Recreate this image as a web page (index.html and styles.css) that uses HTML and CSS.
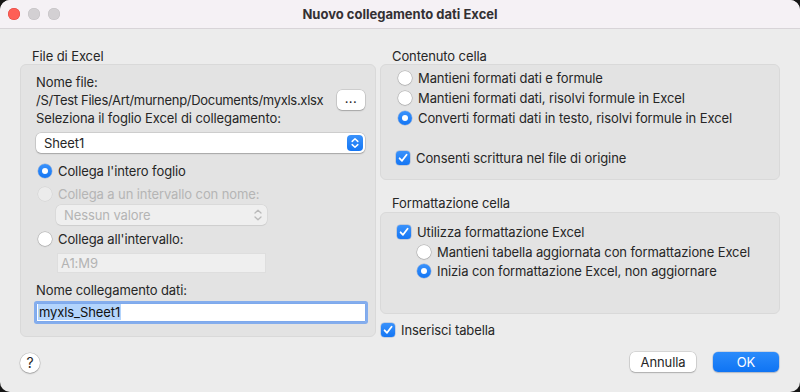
FILE: index.html
```html
<!DOCTYPE html>
<html lang="it">
<head>
<meta charset="utf-8">
<title>Nuovo collegamento dati Excel</title>
<link rel="stylesheet" href="styles.css">
</head>
<body>
<div class="window">
  <header class="titlebar">
    <div class="lights">
      <span class="light red"></span>
      <span class="light gray"></span>
      <span class="light gray"></span>
    </div>
    <div class="title">Nuovo collegamento dati Excel</div>
    <div></div>
  </header>

  <main class="content">
    <div class="columns">
      <section class="col">
        <div class="group-label">File di Excel</div>
        <div class="box box-file">
          <div class="line l-nome">Nome file:</div>
          <div class="path-row">
            <span class="path">/S/Test Files/Art/murnenp/Documents/myxls.xlsx</span>
            <span class="btn btn-dots">...</span>
          </div>
          <div class="line l-sel">Seleziona il foglio Excel di collegamento:</div>
          <div class="popup popup-sheet">
            <span class="popup-text">Sheet1</span>
            <span class="popup-arrows">
              <svg width="16" height="16" viewBox="0 0 16 16"><path d="M5.2 6.4 L8 3.8 L10.8 6.4 M5.2 9.6 L8 12.2 L10.8 9.6" fill="none" stroke="#fff" stroke-width="1.5" stroke-linecap="round" stroke-linejoin="round"/></svg>
            </span>
          </div>
          <label class="opt r-intero"><span class="radio on"></span><span>Collega l'intero foglio</span></label>
          <label class="opt r-nome disabled"><span class="radio dis"></span><span>Collega a un intervallo con nome:</span></label>
          <div class="popup popup-dis">
            <span class="popup-text">Nessun valore</span>
            <svg class="dis-arrows" width="10" height="16" viewBox="0 0 10 16"><path d="M2 6 L5 3.2 L8 6 M2 10 L5 12.8 L8 10" fill="none" stroke="#b9b9b9" stroke-width="1.3" stroke-linecap="round" stroke-linejoin="round"/></svg>
          </div>
          <label class="opt r-interv"><span class="radio"></span><span>Collega all'intervallo:</span></label>
          <div class="field field-dis">A1:M9</div>
          <div class="line l-coll">Nome collegamento dati:</div>
          <div class="field field-focus"><span class="sel">myxls_Sheet1</span></div>
        </div>
      </section>

      <section class="col">
        <div class="group-label">Contenuto cella</div>
        <div class="box box-cont">
          <label class="opt row20"><span class="radio"></span><span>Mantieni formati dati e formule</span></label>
          <label class="opt row20"><span class="radio"></span><span>Mantieni formati dati, risolvi formule in Excel</span></label>
          <label class="opt row20"><span class="radio on"></span><span>Converti formati dati in testo, risolvi formule in Excel</span></label>
          <label class="opt row20 c-consenti"><span class="check"><svg width="14" height="14" viewBox="0 0 14 14"><path d="M3.6 7.3 L6 9.8 L10.6 3.8" fill="none" stroke="#fff" stroke-width="1.8" stroke-linecap="round" stroke-linejoin="round"/></svg></span><span>Consenti scrittura nel file di origine</span></label>
        </div>
        <div class="group-label gl-form">Formattazione cella</div>
        <div class="box box-form">
          <label class="opt row20 c-util"><span class="check"><svg width="14" height="14" viewBox="0 0 14 14"><path d="M3.6 7.3 L6 9.8 L10.6 3.8" fill="none" stroke="#fff" stroke-width="1.8" stroke-linecap="round" stroke-linejoin="round"/></svg></span><span>Utilizza formattazione Excel</span></label>
          <label class="opt row19 sub"><span class="radio"></span><span>Mantieni tabella aggiornata con formattazione Excel</span></label>
          <label class="opt row19 sub"><span class="radio on"></span><span>Inizia con formattazione Excel, non aggiornare</span></label>
        </div>
        <label class="opt row20 c-ins"><span class="check"><svg width="14" height="14" viewBox="0 0 14 14"><path d="M3.6 7.3 L6 9.8 L10.6 3.8" fill="none" stroke="#fff" stroke-width="1.8" stroke-linecap="round" stroke-linejoin="round"/></svg></span><span>Inserisci tabella</span></label>
      </section>
    </div>

    <footer class="footer">
      <span class="help">?</span>
      <div class="actions">
        <span class="btn btn-action">Annulla</span>
        <span class="btn btn-action btn-ok">OK</span>
      </div>
    </footer>
  </main>
</div>
</body>
</html>
```

FILE: styles.css
```css
* { box-sizing: border-box; }

html, body {
  margin: 0;
  padding: 0;
  background: #161616;
}

body {
  font-family: "Inter", "Noto Sans", "Liberation Sans", sans-serif;
  font-size: 13px;
  letter-spacing: -0.1px;
  color: #262626;
}

.window {
  width: 800px;
  height: 392px;
  border-radius: 10px;
  overflow: hidden;
  background: #ececec;
  display: flex;
  flex-direction: column;
}

.titlebar {
  height: 29px;
  flex: none;
  background: #f5f1f5;
  border-bottom: 1px solid #d8d4d8;
  display: grid;
  grid-template-columns: 1fr auto 1fr;
  align-items: center;
}

.lights {
  display: flex;
  gap: 8px;
  padding-left: 8px;
  padding-bottom: 1px;
}

.light {
  width: 12px;
  height: 12px;
  border-radius: 50%;
}

.light.red {
  background: #fe5f57;
  box-shadow: inset 0 0 0 0.5px #e0443e;
}

.light.gray {
  background: #d3d0d3;
  box-shadow: inset 0 0 0 0.5px #c2bfc2;
}

.title {
  font-weight: 700;
  font-size: 13px;
  letter-spacing: 0;
  color: #333033;
  padding-bottom: 1px;
}

.content {
  flex: 1;
  padding: 20px 21px 0 20px;
  display: flex;
  flex-direction: column;
}

.columns {
  display: grid;
  grid-template-columns: 356px 400px;
  column-gap: 4px;
  align-items: start;
}

.col {
  display: flex;
  flex-direction: column;
}

.group-label {
  height: 15px;
  line-height: 15px;
  padding-left: 12px;
}

.gl-form {
  margin-top: 16px;
  height: 16px;
}

.box {
  background: #e3e3e3;
  border: 1px solid #d9d9d9;
  border-radius: 6px;
  display: flex;
  flex-direction: column;
}

/* ---------- left box ---------- */
.box-file {
  padding: 9px 10px 14px 15px;
}

.line {
  height: 16px;
  line-height: 16px;
  white-space: nowrap;
}

.path-row {
  height: 22px;
  margin-top: -1px;
  display: flex;
  align-items: center;
  justify-content: space-between;
}

.path {
  white-space: nowrap;
  letter-spacing: -0.3px;
}

.btn {
  background: #fff;
  border-radius: 5px;
  box-shadow: 0 0 0 0.5px rgba(0,0,0,0.18), 0 1px 1.5px rgba(0,0,0,0.2);
  display: flex;
  align-items: center;
  justify-content: center;
}

.btn-dots {
  width: 28px;
  height: 20px;
  font-size: 13px;
  letter-spacing: 0.5px;
  padding-bottom: 4px;
}

.l-sel { margin-top: -1px; }

.popup {
  height: 20px;
  border-radius: 5px;
  display: flex;
  align-items: center;
  justify-content: space-between;
}

.popup-sheet {
  margin-top: 7px;
  background: #fff;
  box-shadow: 0 0 0 0.5px rgba(0,0,0,0.18), 0 1px 1.5px rgba(0,0,0,0.2);
  padding: 0 2px 0 8px;
}

.popup-arrows {
  width: 16px;
  height: 16px;
  border-radius: 4px;
  background: linear-gradient(#3a92fb, #1476f4);
  display: flex;
}

.opt {
  display: flex;
  align-items: center;
  gap: 6px;
  white-space: nowrap;
}

.radio {
  width: 14px;
  height: 14px;
  border-radius: 50%;
  background: #fff;
  box-shadow: 0 0 0 0.5px rgba(0,0,0,0.22), 0 0.5px 1.5px rgba(0,0,0,0.18);
  flex: none;
  display: flex;
  align-items: center;
  justify-content: center;
}

.radio.on {
  background: linear-gradient(#3a92fb, #1476f4);
  box-shadow: 0 0 0 0.5px rgba(0,60,160,0.3);
}

.radio.on::after {
  content: "";
  width: 6px;
  height: 6px;
  border-radius: 50%;
  background: #fff;
}

.radio.dis {
  background: #ececec;
  box-shadow: 0 0 0 0.5px rgba(0,0,0,0.08);
}

.disabled { color: #b5b5b5; }

.r-intero { height: 18px; margin-top: 9px; margin-left: 2px; }
.r-nome   { height: 18px; margin-top: 5px; margin-left: 2px; }
.r-interv { height: 18px; margin-top: 5px; margin-left: 2px; }

.popup-dis {
  margin-top: 2px;
  margin-left: 20px;
  width: 211px;
  background: #efefef;
  box-shadow: 0 0 0 0.5px rgba(0,0,0,0.07), 0 0.5px 1px rgba(0,0,0,0.06);
  padding: 0 4px 0 8px;
  color: #b4b4b4;
}

.field {
  height: 20px;
  line-height: 20px;
  white-space: nowrap;
}

.field-dis {
  margin-top: 5px;
  margin-left: 21px;
  width: 209px;
  background: #efefef;
  border: 1px solid #dedede;
  line-height: 18px;
  padding-left: 3px;
  color: #b3b3b3;
}

.l-coll { margin-top: 9px; }

.field-focus {
  margin-top: 5px;
  height: 19px;
  line-height: 17px;
  background: #fff;
  border: 1px solid #7ea9ec;
  box-shadow: 0 0 0 2px rgba(100,155,240,0.75);
  border-radius: 1px;
  padding-left: 1px;
  width: 330px;
}

.sel {
  background: #b3d4fc;
  color: #111;
  padding: 0 1px;
}

/* ---------- right ---------- */
.box-cont {
  padding: 3px 10px 11px 17px;
}

.box-form {
  padding: 9px 10px 33px 17px;
}

.row20 { height: 20px; }
.row19 { height: 19px; }

.check {
  width: 14px;
  height: 14px;
  border-radius: 3.5px;
  background: linear-gradient(#3a92fb, #1476f4);
  box-shadow: 0 0 0 0.5px rgba(0,60,160,0.3);
  flex: none;
  display: flex;
}

.c-consenti { margin-top: 20px; margin-left: -2px; }
.c-util { margin-left: -1px; }
.sub { margin-left: 19px; }
.sub:first-of-type { margin-top: 1px; }

.c-ins { margin-top: 6px; margin-left: 1px; }

/* ---------- footer ---------- */
.footer {
  margin-top: 11px;
  height: 21px;
  display: flex;
  align-items: center;
  justify-content: space-between;
}

.help {
  width: 20px;
  height: 20px;
  border-radius: 50%;
  background: #fff;
  box-shadow: 0 0 0 0.5px rgba(0,0,0,0.18), 0 1px 1.5px rgba(0,0,0,0.22);
  display: flex;
  align-items: center;
  justify-content: center;
  font-size: 14px;
  margin-top: 2px;
}

.actions {
  display: flex;
  gap: 17px;
}

.btn-action {
  width: 66px;
  height: 20px;
}

.btn-ok {
  background: linear-gradient(#2b8bfb, #0f74f3);
  color: #fff;
  box-shadow: 0 0 0 0.5px rgba(0,60,160,0.25), 0 1px 1.5px rgba(0,0,0,0.15);
}
```
